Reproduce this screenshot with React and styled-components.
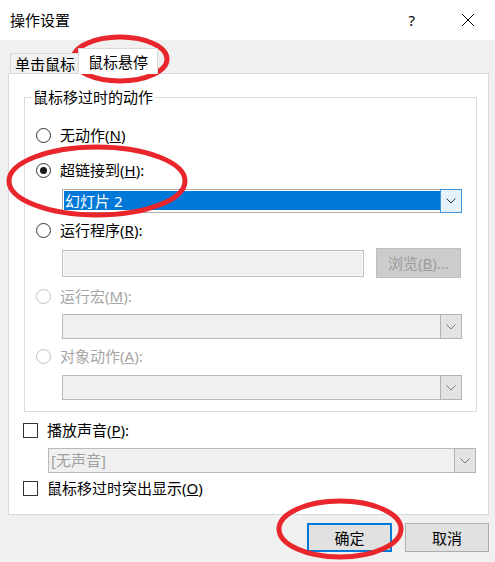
import React from "react";
import styled, { createGlobalStyle } from "styled-components";

const GlobalStyle = createGlobalStyle`
  html, body {
    margin: 0;
    padding: 0;
    background: #ffffff;
  }
  body {
    font-family: "Noto Sans", "Noto Sans CJK SC", sans-serif;
  }
`;

const Window = styled.div`
  position: relative;
  width: 495px;
  height: 562px;
  display: flex;
  flex-direction: column;
  overflow: hidden;
  font-size: 15px;
  color: #000000;
`;

const TitleBar = styled.div`
  flex: none;
  height: 40px;
  display: flex;
  align-items: center;
  padding: 0 20px 0 10px;
  background: #ffffff;
`;

const Title = styled.div`
  flex: 1;
  font-size: 15px;
  line-height: 20px;
`;

const Help = styled.span`
  font-size: 15px;
  line-height: 20px;
  margin-right: 46px;
`;

const Body = styled.div`
  flex: 1;
  display: flex;
  flex-direction: column;
  background: #f0f0f0;
  padding: 8px 6px 0 8px;
`;

const TabStrip = styled.div`
  display: flex;
  align-items: flex-end;
  height: 26px;
  padding-left: 2px;
  margin-bottom: -1px;
  position: relative;
  z-index: 1;
`;

const Tab = styled.div`
  box-sizing: border-box;
  height: ${(p) => (p.$active ? 26 : 21)}px;
  padding: 0 ${(p) => (p.$active ? 9 : 4)}px;
  margin-left: ${(p) => (p.$active ? -2 : 0)}px;
  display: flex;
  align-items: center;
  border: 1px solid #d9d9d9;
  border-bottom: ${(p) => (p.$active ? "none" : "1px solid #d9d9d9")};
  background: ${(p) => (p.$active ? "#ffffff" : "#f0f0f0")};
  font-size: 15px;
  line-height: 20px;
`;

const Panel = styled.div`
  box-sizing: border-box;
  height: 442px;
  display: flex;
  flex-direction: column;
  background: #ffffff;
  border: 1px solid #d9d9d9;
  padding: 0 11px 0 15px;
`;

const Group = styled.fieldset`
  margin: 13px 0 0 0;
  padding: 18px 13px 11px 11px;
  border: 1px solid #dcdcdc;
  display: flex;
  flex-direction: column;
  min-width: 0;
`;

const Legend = styled.legend`
  margin-left: -5px;
  padding: 0 2px;
  font-size: 15px;
  line-height: 20px;
`;

const OptionRow = styled.div`
  display: flex;
  align-items: center;
  gap: 9px;
  height: 20px;
  margin-top: ${(p) => p.$mt || 0}px;
  margin-left: ${(p) => p.$ml || 0}px;
  color: ${(p) => (p.$disabled ? "#a6a6a6" : "#000000")};
  font-size: 15px;
  line-height: 20px;
`;

const Radio = styled.span`
  box-sizing: border-box;
  width: 15px;
  height: 15px;
  border-radius: 50%;
  border: 1px solid ${(p) => (p.$disabled ? "#c4c4c4" : "#333333")};
  background: #ffffff;
  display: flex;
  align-items: center;
  justify-content: center;

  &::after {
    content: "";
    display: ${(p) => (p.$checked ? "block" : "none")};
    width: 7px;
    height: 7px;
    border-radius: 50%;
    background: #1a1a1a;
  }
`;

const Checkbox = styled.span`
  box-sizing: border-box;
  width: 15px;
  height: 15px;
  border: 1px solid #333333;
  background: #ffffff;
`;

const FieldRow = styled.div`
  display: flex;
  align-items: center;
  margin-left: ${(p) => p.$indent}px;
  margin-top: ${(p) => p.$mt || 0}px;
`;

const Combo = styled.div`
  display: flex;
  width: ${(p) => p.$w}px;
  height: ${(p) => p.$h}px;
`;

const ComboValue = styled.div`
  flex: 1;
  display: flex;
  box-sizing: border-box;
  border: 1px solid ${(p) => (p.$active ? "#adadad" : "#b9b9b9")};
  border-right: none;
  background: ${(p) => (p.$active ? "#ffffff" : "#f0f0f0")};
  padding: 1px 0 2px 1px;
`;

const ComboText = styled.div`
  flex: 1;
  display: flex;
  align-items: center;
  padding-left: 1px;
  background: ${(p) => (p.$selected ? "#0078d7" : "transparent")};
  color: ${(p) => (p.$selected ? "#ffffff" : "#a0a0a0")};
  font-size: 15px;
  line-height: 18px;
`;

const DropButton = styled.div`
  width: 22px;
  flex: none;
  box-sizing: border-box;
  display: flex;
  align-items: center;
  justify-content: center;
  border: 1px solid ${(p) => (p.$active ? "#3d96e0" : "#b3b3b3")};
  background: ${(p) => (p.$active ? "#e5f1fb" : "#e3e3e3")};
`;

const TextBox = styled.div`
  box-sizing: border-box;
  width: 302px;
  height: 27px;
  border: 1px solid #bfbfbf;
  background: #f0f0f0;
  box-shadow: inset 0 0 0 1px #fafafa;
`;

const Button = styled.div`
  box-sizing: border-box;
  width: ${(p) => p.$w}px;
  height: ${(p) => p.$h}px;
  margin-left: ${(p) => p.$ml || 0}px;
  display: flex;
  align-items: center;
  justify-content: center;
  border: 1px solid ${(p) => (p.$primary ? "#0078d7" : p.$disabled ? "#bfbfbf" : "#adadad")};
  box-shadow: ${(p) => (p.$primary ? "inset 0 0 0 1px #0078d7" : "none")};
  background: ${(p) => (p.$disabled ? "#cccccc" : "#e1e1e1")};
  color: ${(p) => (p.$disabled ? "#9b9b9b" : "#000000")};
  font-size: 15px;
  line-height: 20px;
`;

const Footer = styled.div`
  display: flex;
  justify-content: flex-end;
  gap: 13px;
  padding-top: 8px;
`;

const Annotations = styled.svg`
  position: absolute;
  left: 0;
  top: 0;
  pointer-events: none;
`;

const Chevron = ({ disabled }) => (
  <svg width="10" height="6" viewBox="0 0 10 6">
    <polyline
      points="0.5,0.5 5,5 9.5,0.5"
      fill="none"
      stroke={disabled ? "#7a7a7a" : "#333333"}
      strokeWidth="1"
    />
  </svg>
);

const CloseIcon = () => (
  <svg width="14" height="14" viewBox="0 0 14 14">
    <path d="M1 1 L13 13 M13 1 L1 13" stroke="#000000" strokeWidth="1" />
  </svg>
);

const Option = ({ label, hotkey, suffix = "", checked, disabled, mt }) => (
  <OptionRow $mt={mt} $disabled={disabled}>
    <Radio $checked={checked} $disabled={disabled} />
    <span>
      {label}(<u>{hotkey}</u>){suffix}
    </span>
  </OptionRow>
);

const DropList = ({ w, h, text, selected, active, disabled }) => (
  <Combo $w={w} $h={h}>
    <ComboValue $active={active}>
      <ComboText $selected={selected}>{text}</ComboText>
    </ComboValue>
    <DropButton $active={active}>
      <Chevron disabled={disabled} />
    </DropButton>
  </Combo>
);

export default function App() {
  return (
    <>
      <GlobalStyle />
      <Window>
        <TitleBar>
          <Title>操作设置</Title>
          <Help>?</Help>
          <CloseIcon />
        </TitleBar>
        <Body>
          <TabStrip>
            <Tab>单击鼠标</Tab>
            <Tab $active>鼠标悬停</Tab>
          </TabStrip>
          <Panel>
            <Group>
              <Legend>鼠标移过时的动作</Legend>
              <Option label="无动作" hotkey="N" />
              <Option label="超链接到" hotkey="H" suffix=":" checked mt={15} />
              <FieldRow $indent={26} $mt={9}>
                <DropList w={400} h={24} text="幻灯片 2" selected active />
              </FieldRow>
              <Option label="运行程序" hotkey="R" suffix=":" mt={7} />
              <FieldRow $indent={26} $mt={8}>
                <TextBox />
                <Button $w={85} $h={30} $ml={12} $disabled>
                  浏览(<u>B</u>)...
                </Button>
              </FieldRow>
              <Option label="运行宏" hotkey="M" suffix=":" disabled mt={8} />
              <FieldRow $indent={26} $mt={8}>
                <DropList w={400} h={25} disabled />
              </FieldRow>
              <Option label="对象动作" hotkey="A" suffix=":" disabled mt={7} />
              <FieldRow $indent={26} $mt={9}>
                <DropList w={400} h={25} disabled />
              </FieldRow>
            </Group>
            <OptionRow $mt={8} $ml={-1}>
              <Checkbox />
              <span>
                播放声音(<u>P</u>):
              </span>
            </OptionRow>
            <FieldRow $indent={24} $mt={8}>
              <DropList w={428} h={25} text="[无声音]" disabled />
            </FieldRow>
            <OptionRow $mt={5} $ml={-1}>
              <Checkbox />
              <span>
                鼠标移过时突出显示(<u>O</u>)
              </span>
            </OptionRow>
          </Panel>
          <Footer>
            <Button $w={85} $h={29} $primary>
              确定
            </Button>
            <Button $w={84} $h={29}>
              取消
            </Button>
          </Footer>
        </Body>
        <Annotations width="495" height="562" viewBox="0 0 495 562">
          <g fill="none" stroke="#e8262b" strokeWidth="5">
            <ellipse cx="120" cy="59" rx="47" ry="22" />
            <ellipse cx="97" cy="181" rx="88" ry="34" />
            <ellipse cx="340" cy="529" rx="61" ry="28" />
          </g>
        </Annotations>
      </Window>
    </>
  );
}
